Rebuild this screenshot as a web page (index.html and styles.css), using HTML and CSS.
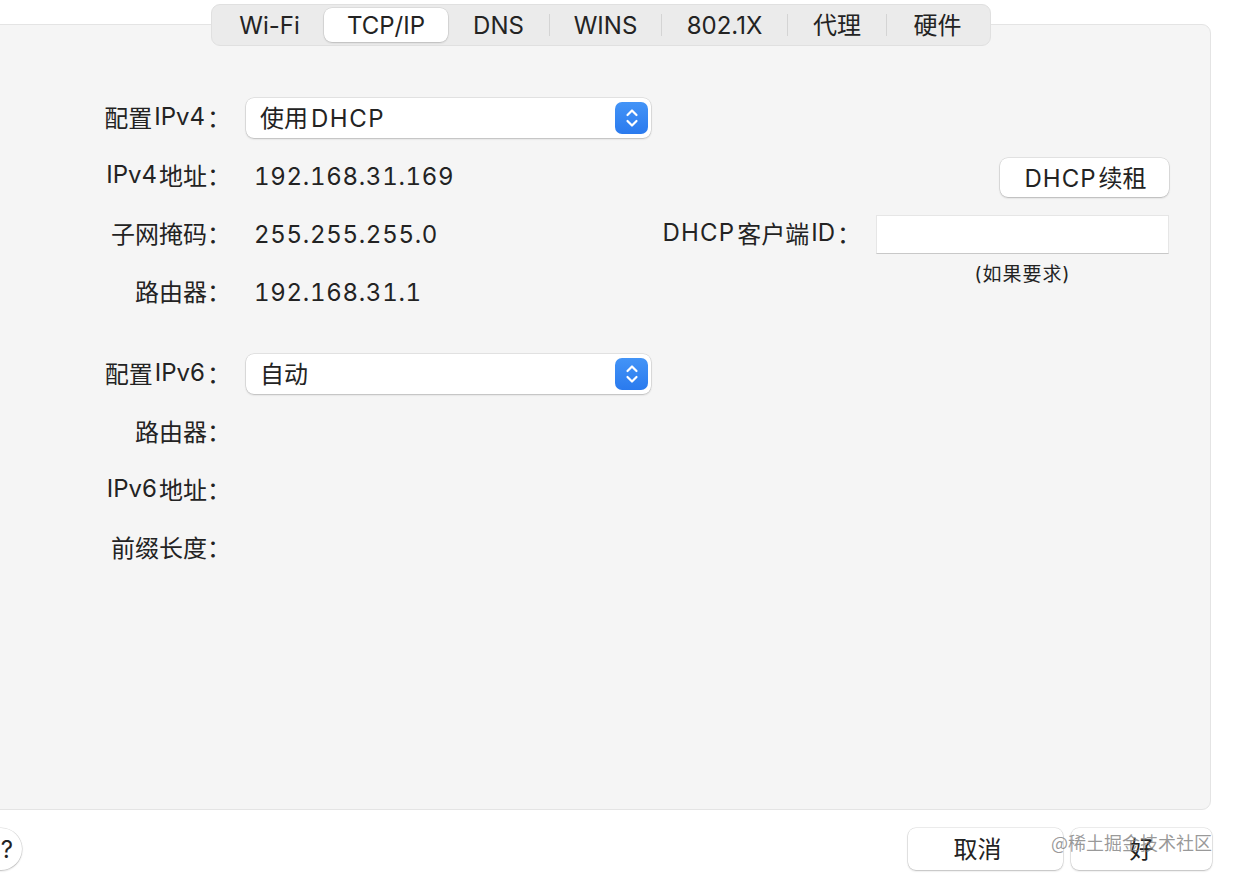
FILE: index.html
```html
<!DOCTYPE html>
<html lang="zh-CN">
<head>
    <meta charset="UTF-8">
    <title>TCP/IP</title>
    <link rel="stylesheet" href="styles.css">
</head>
<body>
    <div class="window">
        <!-- Tab bar -->
        <div class="tabs">
            <div class="tab" style="width: 109px">Wi-Fi</div>
            <div class="tab active" style="width: 124px">TCP/IP</div>
            <div class="tab" style="width: 101px">DNS</div>
            <span class="sep"></span>
            <div class="tab" style="width: 111px">WINS</div>
            <span class="sep"></span>
            <div class="tab" style="width: 125px">802.1X</div>
            <span class="sep"></span>
            <div class="tab cjk" style="width: 98px">代理</div>
            <span class="sep"></span>
            <div class="tab cjk" style="width: 101px">硬件</div>
        </div>

        <!-- Settings panel -->
        <div class="panel">
            <div class="form">
                <div class="label">配置<span class="en">IPv4</span>：</div>
                <div class="select">
                    <span class="select-text">使用<span class="en">DHCP</span></span>
                    <span class="stepper">
                        <svg width="14" height="22" viewBox="0 0 14 22"><path d="M2.5 8 L7 3.5 L11.5 8 M2.5 14 L7 18.5 L11.5 14" fill="none" stroke="#fff" stroke-width="2.2" stroke-linecap="round" stroke-linejoin="round"/></svg>
                    </span>
                </div>
                <div></div>
                <div></div>

                <div class="label"><span class="en">IPv4</span>地址：</div>
                <div class="value">192.168.31.169</div>
                <div></div>
                <div class="right"><button class="btn renew"><span class="en">DHCP</span>续租</button></div>

                <div class="label">子网掩码：</div>
                <div class="value">255.255.255.0</div>
                <div class="label"><span class="en wide">DHCP</span>客户端<span class="en">ID</span>：</div>
                <div class="field"></div>

                <div class="label">路由器：</div>
                <div class="value">192.168.31.1</div>
                <div></div>
                <div class="hint">(如果要求)</div>

                <div class="spacer"></div>

                <div class="label">配置<span class="en">IPv6</span>：</div>
                <div class="select">
                    <span class="select-text">自动</span>
                    <span class="stepper">
                        <svg width="14" height="22" viewBox="0 0 14 22"><path d="M2.5 8 L7 3.5 L11.5 8 M2.5 14 L7 18.5 L11.5 14" fill="none" stroke="#fff" stroke-width="2.2" stroke-linecap="round" stroke-linejoin="round"/></svg>
                    </span>
                </div>
                <div></div>
                <div></div>

                <div class="label">路由器：</div>
                <div></div><div></div><div></div>

                <div class="label"><span class="en">IPv6</span>地址：</div>
                <div></div><div></div><div></div>

                <div class="label">前缀长度：</div>
                <div></div><div></div><div></div>
            </div>
        </div>

        <!-- Footer buttons -->
        <div class="footer">
            <button class="help">?</button>
            <div class="actions">
                <button class="btn cancel">取消</button>
                <button class="btn ok">好</button>
                <span class="watermark">@稀土掘金技术社区</span>
            </div>
        </div>
    </div>
</body>
</html>
```

FILE: styles.css
```css
* {
    margin: 0;
    padding: 0;
    box-sizing: border-box;
}

body {
    width: 1236px;
    height: 876px;
    overflow: hidden;
    background: #ffffff;
    font-family: 'Inter', 'Noto Sans CJK SC', sans-serif;
    font-size: 24px;
    color: #232323;
}

.window {
    padding-top: 4px;
}

.en {
    margin: 0 2px;
}

.en.wide {
    letter-spacing: 1.2px;
}

/* Tabs */
.tabs {
    position: relative;
    z-index: 1;
    display: flex;
    align-items: center;
    width: 780px;
    height: 42px;
    margin-left: 211px;
    margin-bottom: -22px;
    padding: 3px;
    background: #ebebeb;
    border: 1px solid #e0e0e0;
    border-radius: 9px;
}

.tab {
    height: 100%;
    display: flex;
    align-items: center;
    justify-content: center;
    flex-shrink: 0;
}

.tab.cjk {
    padding-bottom: 4px;
}

.tab.active {
    background: #ffffff;
    border-radius: 8px;
    box-shadow: 0 0 0 0.5px rgba(0, 0, 0, 0.12), 0 1px 2px rgba(0, 0, 0, 0.15);
}

.sep {
    width: 1px;
    height: 22px;
    background: #d4d4d4;
    flex-shrink: 0;
}

/* Panel */
.panel {
    width: 1222px;
    height: 786px;
    margin-left: -11px;
    padding: 73px 0 0 11px;
    background: #f5f5f5;
    border: 1px solid #e4e4e4;
    border-radius: 9px;
}

.form {
    display: grid;
    grid-template-columns: 230px 405px 195px 293px;
    grid-template-rows: 40px 40px 40px 40px 6px 40px 40px 40px 40px;
    column-gap: 15px;
    row-gap: 18px;
}

.form > .spacer {
    grid-column: 1 / -1;
}

.label {
    display: flex;
    align-items: center;
    justify-content: flex-end;
    padding-bottom: 3px;
    white-space: nowrap;
}

.value {
    display: flex;
    align-items: center;
    padding-left: 8px;
    letter-spacing: 0.7px;
    font-variant-numeric: tabular-nums;
}

.select {
    display: flex;
    align-items: center;
    justify-content: space-between;
    padding: 0 3px 0 14px;
    background: #ffffff;
    border-radius: 8px;
    box-shadow: 0 0 0 0.5px rgba(0, 0, 0, 0.14), 0 1px 2px rgba(0, 0, 0, 0.18);
}

.select-text {
    padding-bottom: 3px;
}

.select-text .en {
    letter-spacing: 1.5px;
    margin-left: 3px;
}

.stepper {
    width: 33px;
    height: 32px;
    display: flex;
    align-items: center;
    justify-content: center;
    background: linear-gradient(#4394f7, #2a7aee);
    border-radius: 7px;
}

.right {
    display: flex;
    justify-content: flex-end;
}

.btn {
    font-family: inherit;
    font-size: 24px;
    color: #232323;
    background: #ffffff;
    border: none;
    border-radius: 8px;
    box-shadow: 0 0 0 0.5px rgba(0, 0, 0, 0.14), 0 1px 2px rgba(0, 0, 0, 0.2);
}

.renew {
    width: 169px;
    height: 39px;
    margin-top: 2px;
    padding-bottom: 3px;
}

.renew .en {
    letter-spacing: 1px;
}

.field {
    margin-top: 1px;
    height: 39px;
    background: #ffffff;
    border: 1px solid #e6e6e6;
    border-bottom-color: #c8c8c8;
}

.hint {
    margin-top: -9px;
    text-align: center;
    font-size: 19px;
    line-height: 24px;
    letter-spacing: 1px;
    align-self: start;
}

/* Footer */
.footer {
    display: flex;
    justify-content: space-between;
    align-items: center;
    margin-top: 18px;
    margin-left: -20px;
    padding-right: 24px;
}

.help {
    width: 42px;
    height: 42px;
    padding-right: 9px;
    text-align: right;
    border-radius: 50%;
    border: none;
    background: #ffffff;
    box-shadow: 0 0 0 0.5px rgba(0, 0, 0, 0.14), 0 1px 2px rgba(0, 0, 0, 0.2);
    font-family: inherit;
    font-size: 24px;
    color: #232323;
}

.actions {
    position: relative;
    display: flex;
    gap: 8px;
}

.cancel {
    width: 155px;
    height: 42px;
    padding: 0 16px 4px 0;
}

.ok {
    width: 141px;
    height: 42px;
    padding-bottom: 4px;
}

.watermark {
    position: absolute;
    right: 0;
    top: 1px;
    font-family: 'Noto Sans CJK SC', sans-serif;
    font-size: 18px;
    color: rgba(120, 120, 120, 0.75);
    white-space: nowrap;
}
```
